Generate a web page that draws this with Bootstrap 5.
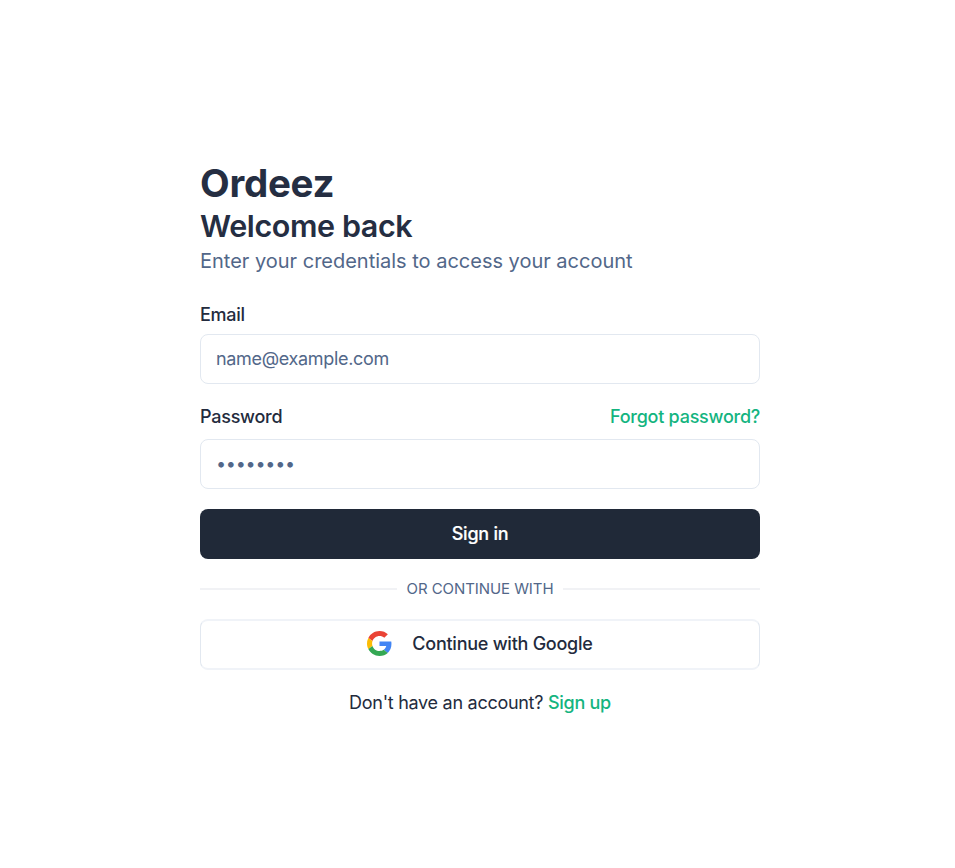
<!DOCTYPE html>
<html lang="en">
<head>
<meta charset="utf-8">
<meta name="viewport" content="width=device-width, initial-scale=1">
<title>Ordeez</title>
<link href="https://cdn.jsdelivr.net/npm/bootstrap@5.3.0/dist/css/bootstrap.min.css" rel="stylesheet">
<style>
body{font-family:Inter,sans-serif;font-size:18px;letter-spacing:-.25px;line-height:25px;color:#232b3d;background:#fff}
.login{width:560px;margin-left:200px;padding-top:159px}
.brand{font-size:38.5px;line-height:48px;font-weight:700;letter-spacing:-.25px;color:#252e42}
.welcome{font-size:30.5px;line-height:38px;font-weight:600;letter-spacing:-.4px;color:#252e42}
.intro{font-size:20px;line-height:28px;letter-spacing:-.01px;margin:2px 0 27px;color:#526789}
.muted{color:#526789}
.accent,.accent:hover{color:#14b47f}
.caption{font-weight:500;line-height:25px}
.field{height:50px;border:1px solid #e2e8f0;border-radius:8px;padding:0 15px 2px;font-size:18px;letter-spacing:-.32px;color:#526789}
.field::placeholder{color:#526789}
.email-field{margin-top:7px;margin-bottom:20px}
.password-field{margin-top:10px;margin-bottom:20px;letter-spacing:-.27px}
.action{height:50px;border-radius:8px;font-size:18px;letter-spacing:-.25px;font-weight:500;line-height:25px}
.primary,.primary:hover{background:#202938;border:0;padding:0 0 1px;color:#fff;-webkit-text-stroke:.2px #fff}
.outline,.outline:hover{height:51px;padding:0 0 2px;border-style:solid;border-width:2px 1px;border-color:#f0f3f8 #e2e8f0;background:#fff;color:#232b3d}
.google-logo{width:25px;height:25px;margin-right:20px}
.divider{margin:20px 0}
.rule{height:2px;background:#f1f2f5}
.or{font-size:15px;line-height:20px;padding:0 9.5px;letter-spacing:-.07px}
.footnote{margin:20px 0 0;letter-spacing:-.28px}
</style>
<script src="https://cdn.jsdelivr.net/npm/bootstrap@5.3.0/dist/js/bootstrap.bundle.min.js"></script>
</head>
<body>
<main class="login">
<h1 class="brand mb-0">Ordeez</h1>
<h2 class="welcome mb-0">Welcome back</h2>
<p class="intro">Enter your credentials to access your account</p>
<form>
<label class="caption d-block" for="email">Email</label>
<input class="form-control field email-field" id="email" type="email" placeholder="name@example.com">
<div class="d-flex justify-content-between"><label class="caption" for="pw">Password</label><a class="accent text-decoration-none caption" href="#">Forgot password?</a></div>
<input class="form-control field password-field" id="pw" type="password" placeholder="••••••••">
<button class="btn primary action w-100 d-block" type="button">Sign in</button>
<div class="divider d-flex align-items-center"><span class="rule flex-grow-1"></span><span class="or muted">OR CONTINUE WITH</span><span class="rule flex-grow-1"></span></div>
<button class="btn outline action w-100 d-flex align-items-center justify-content-center" type="button">
<svg class="google-logo" viewBox="0 0 48 48" aria-hidden="true">
<path fill="#ea4335" d="M24 9.5c3.54 0 6.71 1.22 9.21 3.6l6.85-6.85C35.9 2.38 30.47 0 24 0 14.62 0 6.51 5.38 2.56 13.22l7.98 6.19C12.43 13.72 17.74 9.5 24 9.5z"/>
<path fill="#4285f4" d="M46.98 24.55c0-1.57-.15-3.09-.38-4.55H24v9.02h12.94c-.58 2.96-2.26 5.48-4.78 7.18l7.73 6c4.51-4.18 7.09-10.36 7.09-17.65z"/>
<path fill="#fbbc05" d="M10.53 28.59A14.5 14.5 0 0 1 9.77 24c0-1.6.27-3.14.76-4.59l-7.98-6.19A23.97 23.97 0 0 0 0 24c0 3.88.92 7.54 2.56 10.78l7.97-6.19z"/>
<path fill="#34a853" d="M24 48c6.48 0 11.93-2.13 15.89-5.81l-7.73-6c-2.15 1.45-4.92 2.3-8.16 2.3-6.26 0-11.57-4.22-13.47-9.91l-7.98 6.19C6.51 42.62 14.62 48 24 48z"/>
</svg>
<span>Continue with Google</span>
</button>
</form>
<p class="footnote text-center">Don't have an account? <a class="accent text-decoration-none caption" href="#">Sign up</a></p>
</main>
</body>
</html>
